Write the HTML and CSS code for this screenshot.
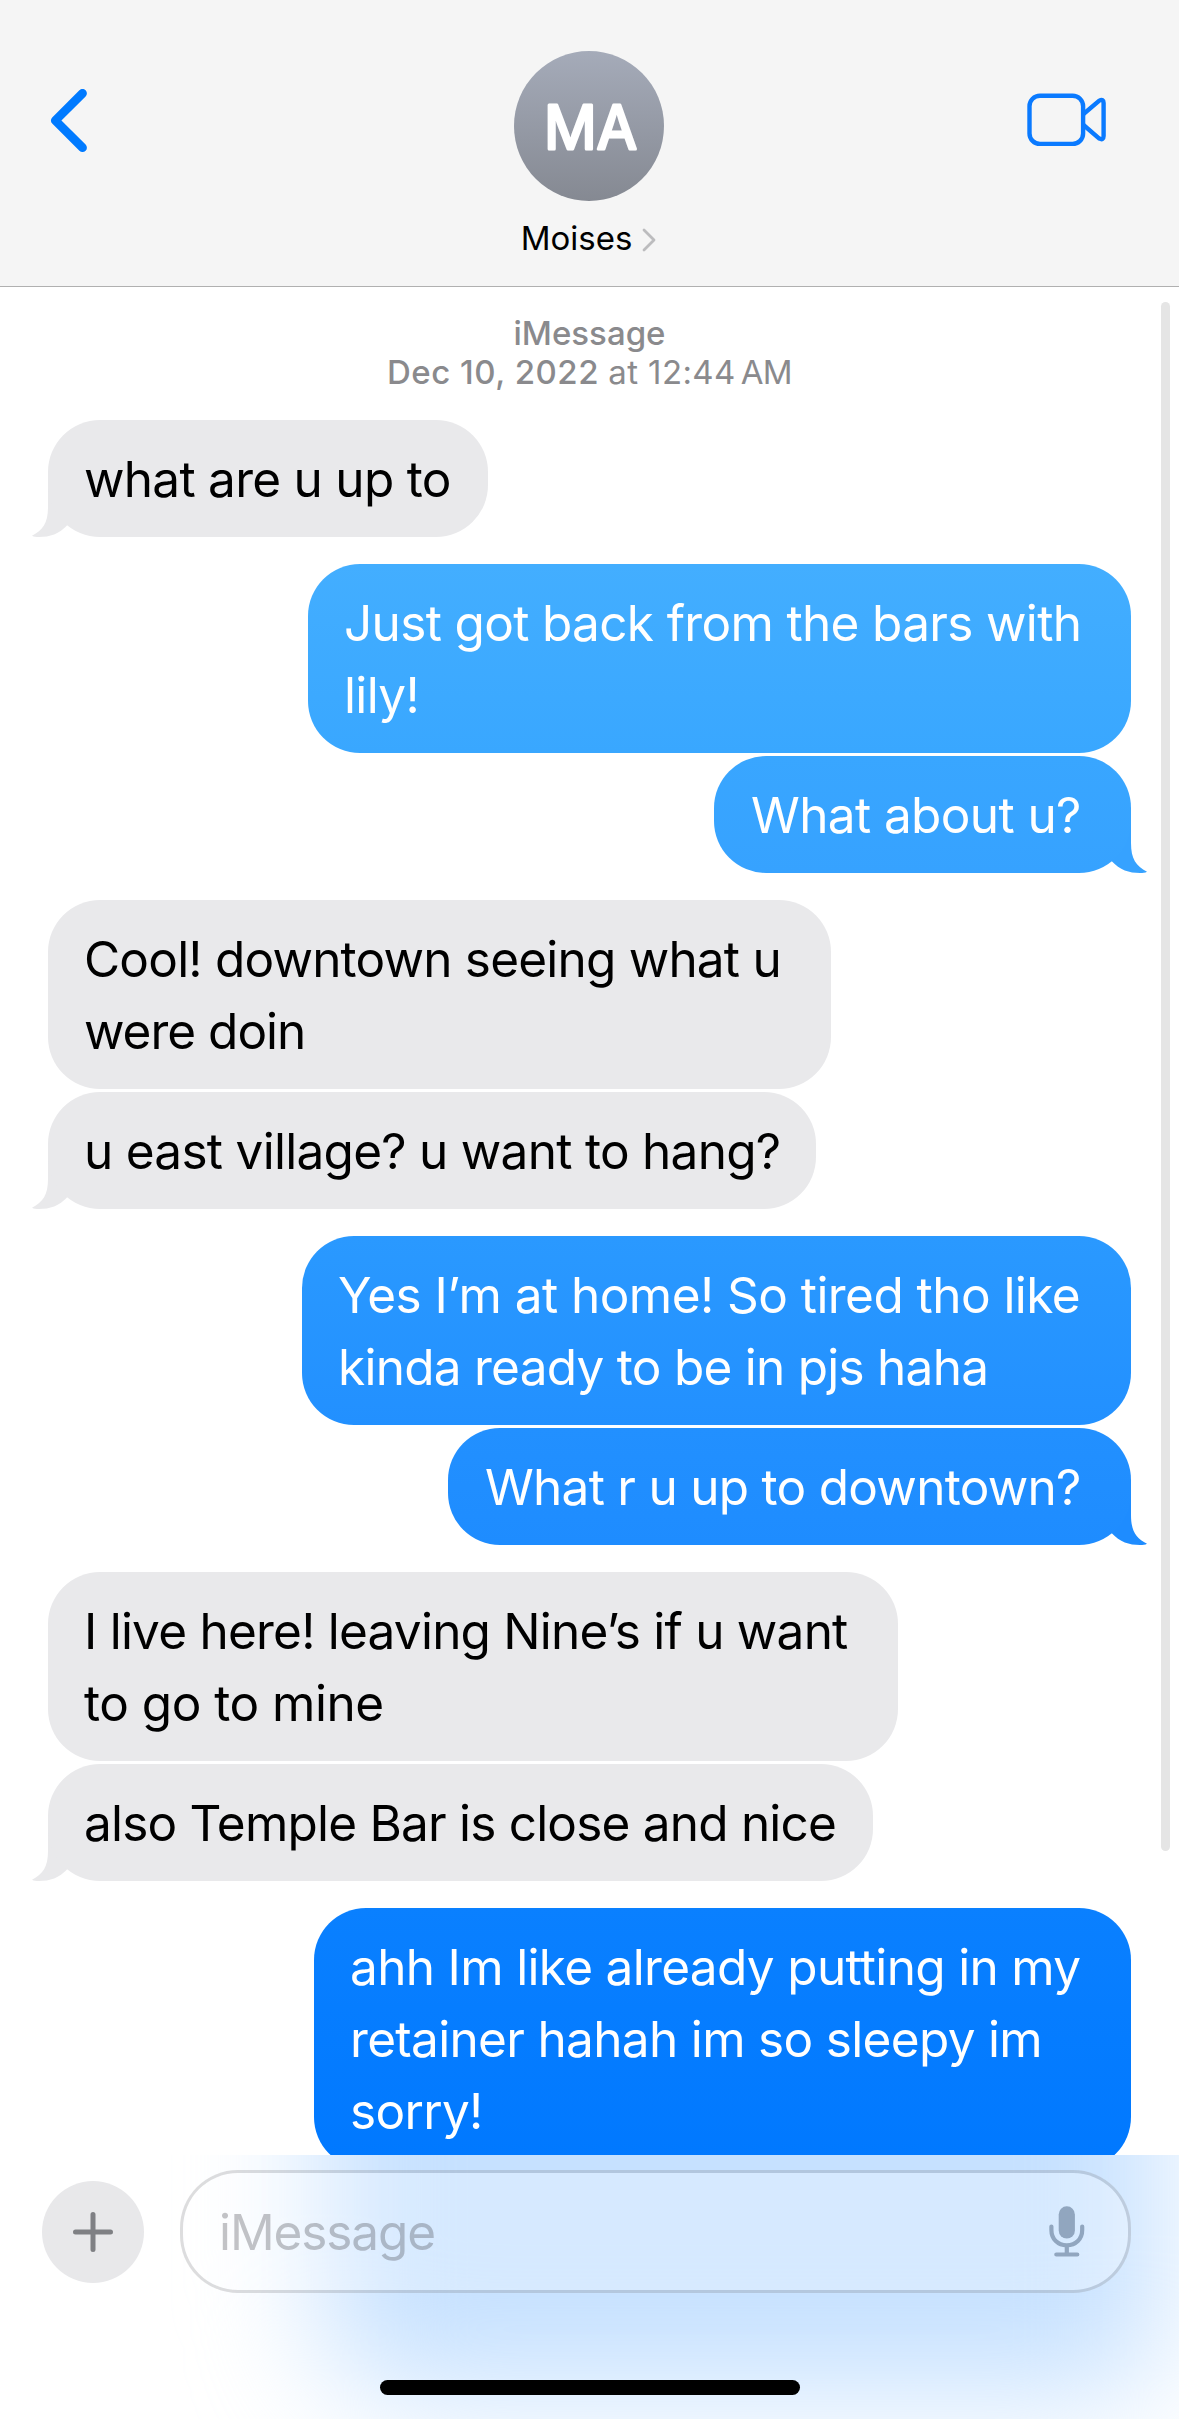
FILE: index.html
```html
<!DOCTYPE html>
<html lang="en">
<head>
<meta charset="utf-8">
<title>Messages – Moises</title>
<link rel="stylesheet" href="styles.css">
</head>
<body>
<div class="screen">
  <header class="header">
    <a class="back" aria-label="Back">
      <svg width="38" height="64" viewBox="0 0 38 64"><path d="M32.5 4.3 5.3 31.5 32.5 58.7" fill="none" stroke="#007aff" stroke-width="8.8" stroke-linecap="round" stroke-linejoin="round"/></svg>
    </a>
    <div class="contact">
      <svg class="avatar" width="150" height="150" viewBox="0 0 150 150">
        <defs><linearGradient id="avatar-fill" x1="0" y1="0" x2="0" y2="1"><stop offset="0" stop-color="#a5abb9"/><stop offset="1" stop-color="#858992"/></linearGradient></defs>
        <circle cx="75" cy="75" r="75" fill="url(#avatar-fill)"/>
        <text class="initials" x="30" y="98.4" textLength="93" lengthAdjust="spacingAndGlyphs">MA</text>
      </svg>
      <div class="name">Moises
        <svg width="14" height="24" viewBox="0 0 14 24"><path d="M2 2 12 12 2 22" fill="none" stroke="#bcbcbe" stroke-width="2.8" stroke-linecap="round" stroke-linejoin="round"/></svg>
      </div>
    </div>
    <a class="video" aria-label="Video call">
      <svg width="80" height="54" viewBox="0 0 80 54"><g fill="none" stroke="#0a7aff" stroke-width="4.4" stroke-linejoin="round"><rect x="2.5" y="2.7" width="53.6" height="48.2" rx="10.5"/><path d="M56.5 21 72.3 7.6Q76.6 5.4 76.6 10V43Q76.6 47.6 72.3 45.6L56.5 32"/></g></svg>
    </a>
  </header>

  <main class="thread">
    <div class="stamp">
      <div class="strong">iMessage</div>
      <div><span class="strong date">Dec 10, 2022</span> <span class="time">at 12:44</span><span class="meridiem">AM</span></div>
    </div>

    <div class="group received">
      <div class="bubble m1">what are u up to<svg class="tail" viewBox="-16 -60 46 60"><path d="M0-60V-30C0-14-5-7-16-1.2 -14 0-12 0-9 0 2 0 11-3 19.5-12L30-18V-60Z"/></svg></div>
    </div>
    <div class="group sent">
      <div class="bubble m2">Just got back from the bars with<br>lily!</div>
      <div class="bubble m3">What about u?<svg class="tail" viewBox="-16 -60 46 60"><path d="M0-60V-30C0-14-5-7-16-1.2 -14 0-12 0-9 0 2 0 11-3 19.5-12L30-18V-60Z"/></svg></div>
    </div>
    <div class="group received">
      <div class="bubble m4">Cool! downtown seeing what u<br><span class="tight">were doin</span></div>
      <div class="bubble m5">u east village? u want to hang?<svg class="tail" viewBox="-16 -60 46 60"><path d="M0-60V-30C0-14-5-7-16-1.2 -14 0-12 0-9 0 2 0 11-3 19.5-12L30-18V-60Z"/></svg></div>
    </div>
    <div class="group sent">
      <div class="bubble m6">Yes I’m at home! So tired tho like<br><span class="snug">kinda ready to be in pjs haha</span></div>
      <div class="bubble m7">What r u up to downtown?<svg class="tail" viewBox="-16 -60 46 60"><path d="M0-60V-30C0-14-5-7-16-1.2 -14 0-12 0-9 0 2 0 11-3 19.5-12L30-18V-60Z"/></svg></div>
    </div>
    <div class="group received">
      <div class="bubble m8">I live here! leaving Nine’s if u want<br><span class="loose">to go to mine</span></div>
      <div class="bubble m9">also Temple Bar is close and nice<svg class="tail" viewBox="-16 -60 46 60"><path d="M0-60V-30C0-14-5-7-16-1.2 -14 0-12 0-9 0 2 0 11-3 19.5-12L30-18V-60Z"/></svg></div>
    </div>
    <div class="group sent">
      <div class="bubble m10">ahh Im like already putting in my<br>retainer hahah im so sleepy im<br>sorry!</div>
    </div>
    <div class="scrollbar"></div>
  </main>

  <footer class="composer">
    <div class="glow"></div>
    <div class="row">
      <div class="add"><svg width="40" height="40" viewBox="0 0 40 40"><path d="M20 2.5V37.5M2.5 20H37.5" stroke="#7f8084" stroke-width="5" stroke-linecap="round"/></svg></div>
      <div class="field">
        <span class="placeholder">iMessage</span>
        <svg width="36" height="51" viewBox="0 0 36 51"><rect x="9.7" y="0.3" width="16.2" height="32.2" rx="8.1" fill="#91a6bf"/><g fill="none" stroke="#91a6bf" stroke-width="4.2" stroke-linecap="round"><path d="M2.4 20.5V24C2.4 33 8.8 39.3 17.8 39.3S33.2 33 33.2 24V20.5M17.8 39.5V48M7.3 48.5H28.3"/></g></svg>
      </div>
    </div>
    <div class="home"></div>
  </footer>
</div>
</body>
</html>
```
FILE: styles.css
```css
* { box-sizing: border-box; }
body {
  margin: 0;
  background: #fff;
  color: #000;
  font-family: Inter, "Liberation Sans", sans-serif;
}
svg { display: block; }

.screen {
  display: flex;
  flex-direction: column;
  width: 1179px;
  height: 2419px;
  overflow: hidden;
}

/* Header */
.header {
  display: grid;
  grid-template-columns: 1fr auto 1fr;
  align-items: start;
  flex: none;
  height: 287px;
  padding: 51px 72px 0 50px;
  background: #f5f5f5;
  border-bottom: 1px solid #b0b0b0;
}
.back { padding-top: 38px; }
.contact {
  display: flex;
  flex-direction: column;
  align-items: center;
  gap: 17px;
  margin-left: 21px;
}
.initials {
  font-size: 60px;
  font-weight: 400;
  fill: #fff;
  stroke: #fff;
  stroke-width: 3px;
  stroke-linejoin: round;
}
.name {
  display: flex;
  align-items: center;
  gap: 10px;
  margin-left: -1px;
  font-size: 33px;
  line-height: 40px;
}
.name svg { margin-top: 4px; }
.video { justify-self: end; padding-top: 42px; }

/* Conversation */
.thread {
  position: relative;
  flex: none;
  height: 1868px;
  padding: 27px 48px 0;
  overflow: hidden;
}
.stamp {
  margin-bottom: 28px;
  color: #8a8a8d;
  font-size: 33px;
  line-height: 39px;
  text-align: center;
}
.strong { font-weight: 500; }
.date { letter-spacing: .5px; }
.time { letter-spacing: .4px; }
.meridiem { margin-left: 5px; letter-spacing: -.7px; }

.group {
  display: flex;
  flex-direction: column;
  align-items: flex-start;
  gap: 3px;
  margin-bottom: 27px;
}
.sent { align-items: flex-end; }
.bubble {
  position: relative;
  padding: 23px 0 22px 36px;
  border-radius: 52px;
  background: #e9e9eb;
  color: #000;
  font-size: 49.5px;
  line-height: 72px;
  letter-spacing: -.72px;
  white-space: nowrap;
}
.sent .bubble {
  background: linear-gradient(var(--from), var(--to));
  color: #fff;
}
.tail {
  position: absolute;
  left: -16px;
  bottom: 0;
  z-index: -1;
  width: 46px;
  height: 60px;
  fill: #e9e9eb;
}
.sent .tail {
  left: auto;
  right: -16px;
  transform: scaleX(-1);
  fill: var(--to);
}
.tight { letter-spacing: -1px; }
.snug { letter-spacing: -.74px; }
.loose { letter-spacing: -.5px; }

.m1 { width: 440px; }
.m2 { width: 823px; letter-spacing: -.66px; --from: #43aeff; --to: #39a7ff; }
.m3 { width: 417px; letter-spacing: -.61px; padding-left: 37px; --from: #39a6ff; --to: #36a2ff; }
.m4 { width: 783px; letter-spacing: -.79px; }
.m5 { width: 768px; }
.m6 { width: 829px; letter-spacing: -.55px; --from: #2a99ff; --to: #2290ff; }
.m7 { width: 683px; padding-left: 37px; --from: #2290ff; --to: #1e8cff; }
.m8 { width: 850px; letter-spacing: -.77px; }
.m9 { width: 825px; letter-spacing: -.79px; }
.m10 { width: 817px; letter-spacing: -.67px; --from: #0a80ff; --to: #0078ff; }

.scrollbar {
  position: absolute;
  top: 15px;
  right: 9px;
  width: 9px;
  height: 1549px;
  border-radius: 5px;
  background: #e5e5e5;
}

/* Composer */
.composer {
  position: relative;
  display: flex;
  flex-direction: column;
  justify-content: space-between;
  flex: none;
  height: 264px;
  padding: 15px 48px 24px 42px;
  overflow: hidden;
}
.glow {
  position: absolute;
  inset: -250px 18px 26px 320px;
  border-radius: 0 0 60px 90px;
  background: #c6e1ff;
  filter: blur(62px);
}
.row {
  position: relative;
  display: flex;
  align-items: center;
  gap: 36px;
}
.add {
  display: grid;
  place-items: center;
  flex: none;
  width: 102px;
  height: 102px;
  border-radius: 50%;
  background: #e8e8ea;
}
.field {
  display: flex;
  align-items: center;
  justify-content: space-between;
  flex: 1;
  height: 123px;
  padding: 0 43px 0 36px;
  border: 3px solid rgba(120, 120, 125, .25);
  border-radius: 58px;
  background: rgba(255, 255, 255, .28);
  background-clip: padding-box;
}
.placeholder {
  color: rgba(60, 60, 67, .3);
  font-size: 49.5px;
  line-height: 72px;
  letter-spacing: -1.1px;
}
.home {
  position: relative;
  align-self: center;
  width: 420px;
  height: 15px;
  margin-left: 6px;
  border-radius: 8px;
  background: #000;
}
```
